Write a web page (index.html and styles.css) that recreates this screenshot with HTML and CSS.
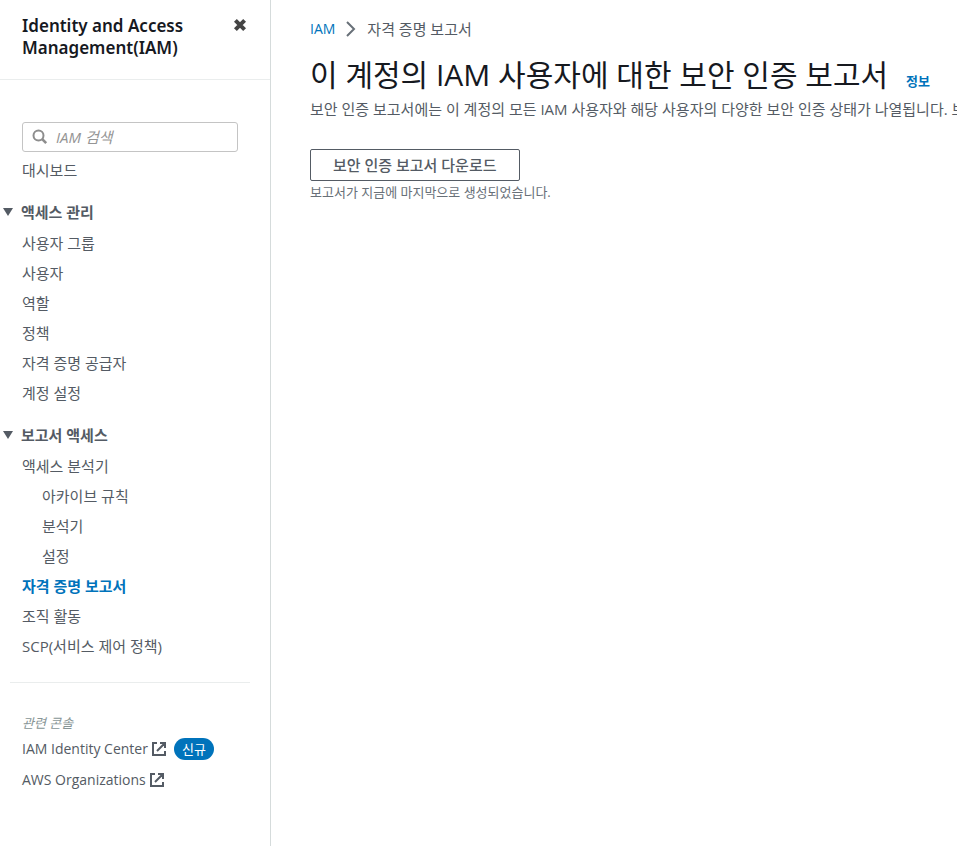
FILE: index.html
```html
<!DOCTYPE html>
<html lang="ko">
<head>
<meta charset="utf-8">
<title>IAM - 자격 증명 보고서</title>
<link rel="stylesheet" href="styles.css">
</head>
<body>
<div class="layout">
  <aside class="sidebar">
    <header class="sidebar-header">
      <h2 class="service-name">Identity and Access Management(IAM)</h2>
      <button class="close" type="button" aria-label="탐색 닫기">
        <svg width="14" height="14" viewBox="0 0 14 14"><path d="M2.4 2.4 11.6 11.6M11.6 2.4 2.4 11.6" stroke="#444" stroke-width="4" fill="none"/></svg>
      </button>
    </header>
    <nav class="nav">
      <label class="search">
        <svg width="16" height="16" viewBox="0 0 16 16" fill="none" stroke="#8d8d8d"><circle cx="6.5" cy="6.5" r="5" stroke-width="2"/><path d="M10.2 10.2 14.2 14.2" stroke-width="2.6"/></svg>
        <input class="search-input" type="text" placeholder="IAM 검색" aria-label="IAM 검색">
      </label>
      <ul class="links">
        <li><a href="#">대시보드</a></li>
      </ul>
      <button class="section" type="button" aria-expanded="true"><span class="caret"></span>액세스 관리</button>
      <ul class="links">
        <li><a href="#">사용자 그룹</a></li>
        <li><a href="#">사용자</a></li>
        <li><a href="#">역할</a></li>
        <li><a href="#">정책</a></li>
        <li><a href="#">자격 증명 공급자</a></li>
        <li><a href="#">계정 설정</a></li>
      </ul>
      <button class="section" type="button" aria-expanded="true"><span class="caret"></span>보고서 액세스</button>
      <ul class="links">
        <li><a href="#">액세스 분석기</a>
          <ul class="links nested">
            <li><a href="#">아카이브 규칙</a></li>
            <li><a href="#">분석기</a></li>
            <li><a href="#">설정</a></li>
          </ul>
        </li>
        <li><a class="current" href="#" aria-current="page">자격 증명 보고서</a></li>
        <li><a href="#">조직 활동</a></li>
        <li><a href="#">SCP(서비스 제어 정책)</a></li>
      </ul>
      <hr class="divider">
      <p class="related">관련 콘솔</p>
      <ul class="links external">
        <li><a href="#">IAM Identity Center<svg class="ext" width="14" height="14" viewBox="0 0 14 14" fill="none" stroke="#545b64" stroke-width="2"><path d="M5 1H1v12h12V9M8 1h5v5M13 1 5 9"/></svg></a><span class="badge">신규</span></li>
        <li><a href="#">AWS Organizations<svg class="ext" width="14" height="14" viewBox="0 0 14 14" fill="none" stroke="#545b64" stroke-width="2"><path d="M5 1H1v12h12V9M8 1h5v5M13 1 5 9"/></svg></a></li>
      </ul>
    </nav>
  </aside>
  <main class="main">
    <nav class="breadcrumb" aria-label="이동 경로">
      <a href="#">IAM</a>
      <svg width="10" height="16" viewBox="0 0 10 16" fill="none" stroke="#687078" stroke-width="2"><path d="M1 1l7 7-7 7"/></svg>
      <span>자격 증명 보고서</span>
    </nav>
    <div class="title-row">
      <h1 class="title">이 계정의 IAM 사용자에 대한 보안 인증 보고서</h1>
      <a class="info" href="#">정보</a>
    </div>
    <p class="description">보안 인증 보고서에는 이 계정의 모든 IAM 사용자와 해당 사용자의 다양한 보안 인증 상태가 나열됩니다. 보</p>
    <button class="download" type="button">보안 인증 보고서 다운로드</button>
    <p class="caption">보고서가 지금에 마지막으로 생성되었습니다.</p>
  </main>
</div>
</body>
</html>
```

FILE: styles.css
```css
* {
  box-sizing: border-box;
}

body {
  margin: 0;
  background: #fff;
  color: #545b64;
  font-family: "Open Sans", "Noto Sans CJK KR", sans-serif;
  font-size: 15px;
  line-height: 20px;
}

a {
  color: inherit;
  text-decoration: none;
}

button,
input {
  font: inherit;
  color: inherit;
}

h1,
h2,
p {
  margin: 0;
}

.layout {
  display: flex;
  min-height: 100vh;
}

.sidebar {
  flex: 0 0 271px;
  min-width: 0;
  border-right: 1px solid #d5dbdb;
}

.sidebar-header {
  display: flex;
  justify-content: space-between;
  align-items: flex-start;
  padding: 15px 23px 20px 22px;
  border-bottom: 1px solid #eaeded;
}

.service-name {
  max-width: 190px;
  color: #16191f;
  font-family: "Noto Sans", sans-serif;
  font-size: 17px;
  font-weight: 600;
  line-height: 22px;
}

.close {
  display: flex;
  padding: 3px 0 0;
  border: 0;
  background: none;
}

.nav {
  padding: 42px 20px 20px 22px;
}

.search {
  display: flex;
  align-items: center;
  gap: 8px;
  height: 30px;
  margin-right: 12px;
  padding: 0 9px;
  border: 1px solid #c4c4c4;
  border-radius: 3px;
}

.search-input {
  flex: 1;
  width: 100%;
  min-width: 0;
  padding: 0;
  border: 0;
  outline: 0;
  background: none;
  font-style: italic;
}

.search-input::placeholder {
  color: #959595;
}

.links {
  margin: 0;
  padding: 0;
  list-style: none;
  line-height: 30px;
}

.search + .links {
  margin-top: 3px;
}

.nested {
  padding-left: 20px;
}

.section {
  display: flex;
  align-items: center;
  gap: 8px;
  margin: 12px 0 0 -19px;
  padding: 5px 0 6px;
  border: 0;
  background: none;
  font-weight: 600;
}

.caret {
  border: 5px solid transparent;
  border-top: 8px solid #545b64;
  border-bottom: 0;
}

.current {
  color: #0073bb;
  font-weight: 700;
}

.divider {
  height: 1px;
  margin: 21px 0 30px -12px;
  border: 0;
  background: #eaeded;
}

.related {
  color: #879596;
  font-size: 13px;
  font-style: italic;
}

.external {
  font-size: 14px;
  line-height: 31px;
}

.external li {
  display: flex;
  align-items: center;
}

.ext {
  margin-left: 4px;
  vertical-align: -2px;
}

.badge {
  margin-left: 8px;
  padding: 0 8px;
  border-radius: 11px;
  background: #0073bb;
  color: #fff;
  font-size: 13px;
  line-height: 22px;
}

.main {
  flex: 1;
  min-width: 0;
  padding: 19px 11px 20px 39px;
}

.breadcrumb {
  display: flex;
  align-items: center;
  gap: 11px;
}

.breadcrumb a {
  color: #0073bb;
  font-size: 14px;
}

.title-row {
  display: flex;
  align-items: baseline;
  gap: 18px;
  margin-top: 16px;
}

.title {
  color: #16191f;
  font-size: 30px;
  font-weight: 400;
  line-height: 40px;
}

.info {
  color: #0073bb;
  font-size: 13px;
  font-weight: 600;
}

.description {
  margin-top: 4px;
  overflow: hidden;
  white-space: nowrap;
}

.download {
  display: block;
  margin: 30px 0 1px;
  padding: 5px 22px;
  border: 1px solid #545b64;
  border-radius: 2px;
  background: #fff;
  font-weight: 500;
}

.caption {
  color: #687078;
  font-size: 13px;
}
```
